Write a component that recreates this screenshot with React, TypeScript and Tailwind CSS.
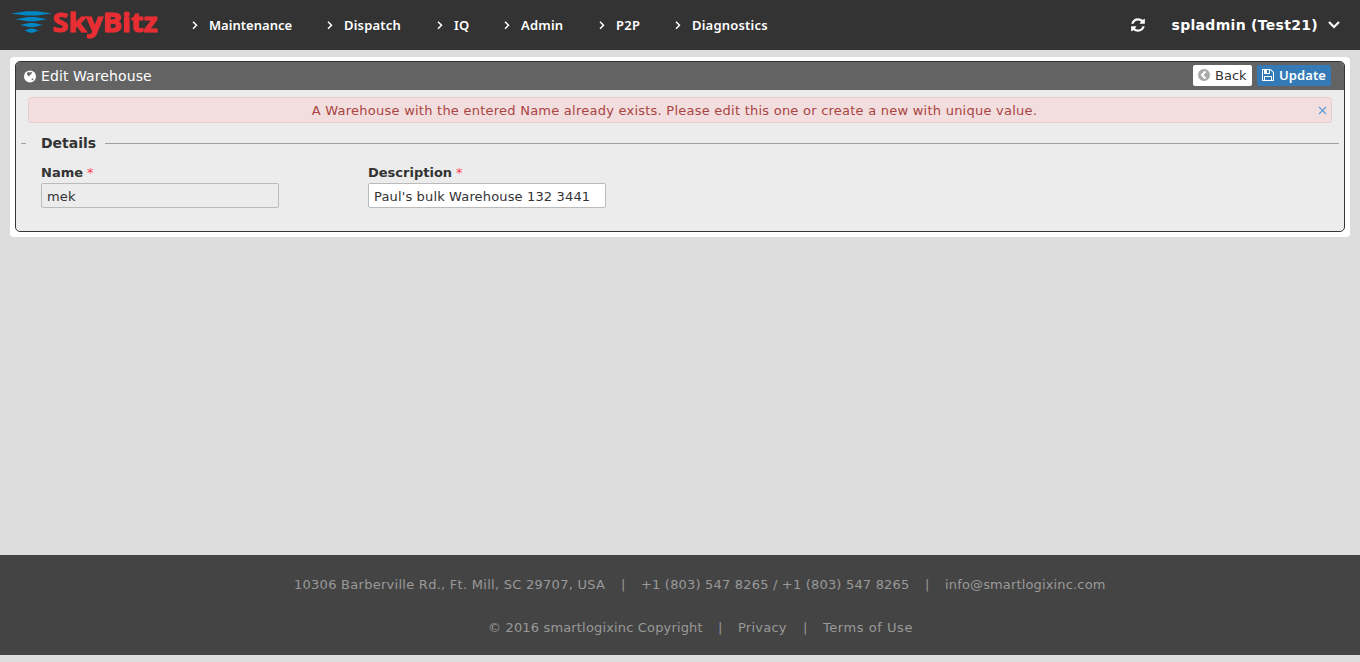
const navItems = [
  { label: 'Maintenance', width: 'w-[135px]', tracking: 'tracking-[0.03px]' },
  { label: 'Dispatch', width: 'w-[110px]', tracking: 'tracking-[0.2px]' },
  { label: 'IQ', width: 'w-[67px]', tracking: 'tracking-[0.3px]' },
  { label: 'Admin', width: 'w-[95px]', tracking: 'tracking-[0.2px]' },
  { label: 'P2P', width: 'w-[76px]', tracking: 'tracking-[0.3px]' },
  { label: 'Diagnostics', width: 'w-[110px]', tracking: 'tracking-[0.2px]' },
];

function FaIcon({ d, className }: { d: string; className: string }) {
  return (
    <svg viewBox="0 0 1792 1792" className={className} fill="currentColor" aria-hidden="true">
      <path d={d} />
    </svg>
  );
}

const REFRESH =
  'M1639 1056q0 5-1 7-64 268-268 434.5t-478 166.5q-146 0-282.5-55t-243.5-157l-129 129q-19 19-45 19t-45-19-19-45v-448q0-26 19-45t45-19h448q26 0 45 19t19 45-19 45l-137 137q71 66 161 102t187 36q134 0 250-65t186-179q11-17 53-117 8-23 30-23h192q13 0 22.5 9.5t9.5 22.5zm25-800v448q0 26-19 45t-45 19h-448q-26 0-45-19t-19-45 19-45l138-138q-148-137-349-137-134 0-250 65t-186 179q-11 17-53 117-8 23-30 23h-199q-13 0-22.5-9.5t-9.5-22.5v-7q65-268 270-434.5t480-166.5q146 0 284 55.5t245 156.5l130-129q19-19 45-19t45 19 19 45z';
const FLOPPY =
  'M512 1536h768v-384h-768v384zm896 0h128v-896q0-14-10-38.5t-20-34.5l-281-281q-10-10-34-20t-39-10v416q0 40-28 68t-68 28h-576q-40 0-68-28t-28-68v-416h-128v1280h128v-416q0-40 28-68t68-28h832q40 0 68 28t28 68v416zm-384-928v-320q0-13-9.5-22.5t-22.5-9.5h-192q-13 0-22.5 9.5t-9.5 22.5v320q0 13 9.5 22.5t22.5 9.5h192q13 0 22.5-9.5t9.5-22.5zm640 32v928q0 40-28 68t-68 28h-1344q-40 0-68-28t-28-68v-1344q0-40 28-68t68-28h928q40 0 88 20t76 48l280 280q28 28 48 76t20 88z';
const BACK =
  'M1037 1395l102-102q19-19 19-45t-19-45l-307-307 307-307q19-19 19-45t-19-45l-102-102q-19-19-45-19t-45 19l-454 454q-19 19-19 45t19 45l454 454q19 19 45 19t45-19zm627-499q0 209-103 385.5t-279.5 279.5-385.5 103-385.5-103-279.5-279.5-103-385.5 103-385.5 279.5-279.5 385.5-103 385.5 103 279.5 279.5 103 385.5z';

function Logo() {
  return (
    <svg width="160" height="50" viewBox="0 0 160 50" className="block shrink-0" role="img" aria-label="SkyBitz">
      <g fill="#0087c5">
        <path d="M11 13.400L26 11.200H37L52 13.400L37 15.600H26Z" />
        <path d="M15.500 19.200L28 17.100H35L47.500 19.200L35 21.300H28Z" />
        <path d="M20 24.900L29 22.900H34L43 24.900L34 27H29Z" />
        <path d="M24.500 30.500L30 28.400H33L38.500 30.500L33 32.800H30Z" />
      </g>
      <text
        x="52.500"
        y="32.300"
        textLength="105"
        lengthAdjust="spacingAndGlyphs"
        fill="#e92e33"
        stroke="#e92e33"
        strokeWidth="1"
        className="font-['Open_Sans',sans-serif] text-[27.500px] font-bold"
      >
        SkyBitz
      </text>
    </svg>
  );
}

function Field({ label, value, readOnly }: { label: string; value: string; readOnly?: boolean }) {
  return (
    <label className="block w-[327px]">
      <span className="block h-[20px] text-[13px] leading-[20px] font-bold text-[#333]">
        {label}
        <span className="ml-[4px] font-normal text-[#ff4050]">*</span>
      </span>
      <input
        readOnly={readOnly}
        defaultValue={value}
        className={`block h-[25px] w-[238px] rounded-[2px] border border-[#bbb] px-[5px] pt-[2px] text-[13px] tracking-[0.15px] text-[#333] outline-none ${
          readOnly ? 'bg-[#ececec]' : 'bg-white'
        }`}
      />
    </label>
  );
}

export default function App() {
  return (
    <div className="flex h-[662px] w-[1360px] flex-col overflow-hidden bg-[#ddd] font-['DejaVu_Sans',Verdana,sans-serif] text-[13px] text-[#333]">
      <header className="flex h-[50px] shrink-0 items-center bg-[#333] text-white">
        <Logo />
        <nav className="ml-[31px] flex">
          {navItems.map((item) => (
            <a key={item.label} className={`flex h-[50px] items-center ${item.width}`}>
              <svg width="8" height="10" viewBox="0 0 8 10" className="mr-[10px] shrink-0">
                <path d="M2 1.800L5.500 5.300L2 8.800" fill="none" stroke="#fff" strokeWidth="1.500" />
              </svg>
              <span
                className={`pt-[2px] font-['Noto_Sans',sans-serif] text-[13px] font-semibold whitespace-nowrap ${item.tracking}`}
              >
                {item.label}
              </span>
            </a>
          ))}
        </nav>
        <div className="ml-auto flex items-center pr-[20px]">
          <FaIcon d={REFRESH} className="mr-[26px] size-[16px]" />
          <span className="text-[14px] font-bold tracking-[0.3px] whitespace-nowrap">spladmin (Test21)</span>
          <svg width="12" height="9" viewBox="0 0 12 9" className="ml-[10px]">
            <path d="M1 1L6 6L11 1" fill="none" stroke="#fff" strokeWidth="2.200" />
          </svg>
        </div>
      </header>

      <main className="mx-[10px] mt-[7px] h-[180px] shrink-0 rounded-[4px] bg-white px-[5px] pt-[4px]">
        <section className="h-[171px] overflow-hidden rounded-[5px] border border-[#333] bg-[#ececec]">
          <div className="flex h-[28px] items-center bg-[#636363] pr-[13px] pl-[8px] text-white">
            <svg width="13" height="13" viewBox="0 0 13 13" className="mr-[4px]">
              <circle cx="6" cy="6.500" r="6" fill="#fff" />
              <path
                d="M3 2.800L5 2L6 2.700L7 1.900L8.300 2.600L7.600 3.600L6.800 4L6.200 5.200L5 5.700L5.500 6.600L4.500 6.200L3.500 5.100L3 4ZM7.500 8.800L8.600 8.400L9.500 9L9 9.900L7.900 10.600Z"
                fill="#636363"
              />
            </svg>
            <h1 className="text-[14px] tracking-[0.1px] whitespace-nowrap">Edit Warehouse</h1>
            <button className="mb-[2px] ml-auto flex h-[21px] w-[59px] items-center rounded-[2px] bg-white pl-[4px] text-[#333]">
              <FaIcon d={BACK} className="mr-[4px] size-[14px] text-[#aaa]" />
              <span className="pt-[2px]">Back</span>
            </button>
            <button className="mb-[2px] ml-[5px] flex h-[21px] w-[74px] items-center rounded-[2px] bg-[#337ab7] pl-[4px] text-white">
              <FaIcon d={FLOPPY} className="mr-[4px] size-[14px]" />
              <span className="pt-px font-['Noto_Sans',sans-serif] font-semibold tracking-[0.1px]">Update</span>
            </button>
          </div>

          <div className="mx-[12px] mt-[7px] flex h-[26px] items-center rounded-[3px] border border-[#ebccd1] bg-[#f2dede] text-[#a94442]">
            <p className="flex-1 pt-[2px] pl-[2px] text-center tracking-[0.24px]">
              A Warehouse with the entered Name already exists. Please edit this one or create a new with unique value.
            </p>
            <svg width="9" height="9" viewBox="0 0 9 9" className="mt-px mr-[4px]">
              <path d="M1 1L8 8M8 1L1 8" stroke="#5a9bd5" strokeWidth="1.100" />
            </svg>
          </div>

          <div className="mt-[10px] mr-[5px] ml-[5px] flex h-[20px] items-center">
            <span className="h-px w-[5px] bg-[#a0a0a0]" />
            <h2 className="ml-[15px] w-[64px] text-[14px] font-bold">Details</h2>
            <span className="h-px flex-1 bg-[#a0a0a0]" />
          </div>

          <form className="mt-[10px] ml-[25px] flex">
            <Field label="Name" value="mek" readOnly />
            <Field label="Description" value="Paul's bulk Warehouse 132 3441" />
          </form>
        </section>
      </main>

      <footer className="mt-auto mb-[7px] h-[100px] shrink-0 bg-[#444] pt-[8px] text-[13px] whitespace-nowrap text-[#999]">
        <div className="flex h-[43px] items-center pl-[294px]">
          <span className="w-[327px] tracking-[0.27px]">10306 Barberville Rd., Ft. Mill, SC 29707, USA</span>
          <span className="w-[20px]">|</span>
          <span className="w-[284px] tracking-[0.19px]">+1 (803) 547 8265 / +1 (803) 547 8265</span>
          <span className="w-[20px]">|</span>
          <span className="tracking-[0.15px]">info@smartlogixinc.com</span>
        </div>
        <div className="flex h-[43px] items-center pl-[488px]">
          <span className="w-[230px] tracking-[0.16px]">© 2016 smartlogixinc Copyright</span>
          <span className="w-[20px]">|</span>
          <span className="w-[65px] tracking-[0.25px]">Privacy</span>
          <span className="w-[20px]">|</span>
          <span className="tracking-[0.55px]">Terms of Use</span>
        </div>
      </footer>
    </div>
  );
}
